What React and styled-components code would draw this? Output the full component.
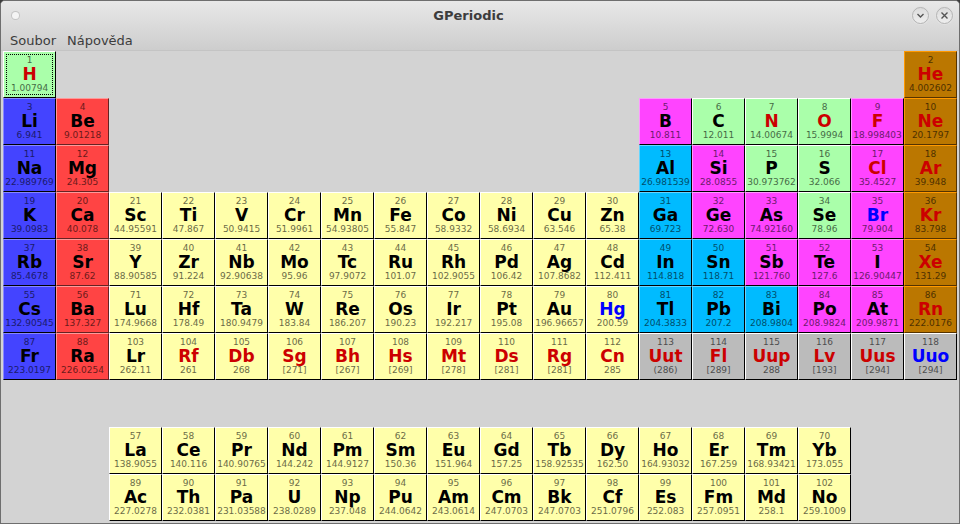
import React from 'react';
import styled, { createGlobalStyle } from 'styled-components';

const Global = createGlobalStyle`
  html, body { margin: 0; padding: 0; background: #3c3c3c; }
  body { font-family: "DejaVu Sans", sans-serif; }
`;

const PALETTE = {
  g: { bg: '#aaffaa', hi: '#ffffff', lo: '#000000' },
  a: { bg: '#4444ff', hi: '#8888ff', lo: '#000000' },
  e: { bg: '#ff4444', hi: '#ff9999', lo: '#662222' },
  t: { bg: '#ffffaa', hi: '#ffffff', lo: '#000000' },
  m: { bg: '#00bbff', hi: '#66d6ff', lo: '#000000' },
  s: { bg: '#ff44ff', hi: '#ff99ff', lo: '#000000' },
  n: { bg: '#bb7700', hi: '#ff9900', lo: '#553300' },
  u: { bg: '#bbbbbb', hi: '#ffffff', lo: '#000000' },
};

const INK = { k: '#000000', r: '#cc0000', b: '#0000ff' };

// [symbol, number, mass, palette, ink, column, row]
const ELEMENTS = [
  ['H', 1, '1.00794', 'g', 'r', 1, 1], ['He', 2, '4.002602', 'n', 'r', 18, 1],
  ['Li', 3, '6.941', 'a', 'k', 1, 2], ['Be', 4, '9.01218', 'e', 'k', 2, 2],
  ['B', 5, '10.811', 's', 'k', 13, 2], ['C', 6, '12.011', 'g', 'k', 14, 2],
  ['N', 7, '14.00674', 'g', 'r', 15, 2], ['O', 8, '15.9994', 'g', 'r', 16, 2],
  ['F', 9, '18.998403', 's', 'r', 17, 2], ['Ne', 10, '20.1797', 'n', 'r', 18, 2],
  ['Na', 11, '22.989769', 'a', 'k', 1, 3], ['Mg', 12, '24.305', 'e', 'k', 2, 3],
  ['Al', 13, '26.981539', 'm', 'k', 13, 3], ['Si', 14, '28.0855', 's', 'k', 14, 3],
  ['P', 15, '30.973762', 'g', 'k', 15, 3], ['S', 16, '32.066', 'g', 'k', 16, 3],
  ['Cl', 17, '35.4527', 's', 'r', 17, 3], ['Ar', 18, '39.948', 'n', 'r', 18, 3],
  ['K', 19, '39.0983', 'a', 'k', 1, 4], ['Ca', 20, '40.078', 'e', 'k', 2, 4],
  ['Sc', 21, '44.95591', 't', 'k', 3, 4], ['Ti', 22, '47.867', 't', 'k', 4, 4],
  ['V', 23, '50.9415', 't', 'k', 5, 4], ['Cr', 24, '51.9961', 't', 'k', 6, 4],
  ['Mn', 25, '54.93805', 't', 'k', 7, 4], ['Fe', 26, '55.847', 't', 'k', 8, 4],
  ['Co', 27, '58.9332', 't', 'k', 9, 4], ['Ni', 28, '58.6934', 't', 'k', 10, 4],
  ['Cu', 29, '63.546', 't', 'k', 11, 4], ['Zn', 30, '65.38', 't', 'k', 12, 4],
  ['Ga', 31, '69.723', 'm', 'k', 13, 4], ['Ge', 32, '72.630', 's', 'k', 14, 4],
  ['As', 33, '74.92160', 's', 'k', 15, 4], ['Se', 34, '78.96', 'g', 'k', 16, 4],
  ['Br', 35, '79.904', 's', 'b', 17, 4], ['Kr', 36, '83.798', 'n', 'r', 18, 4],
  ['Rb', 37, '85.4678', 'a', 'k', 1, 5], ['Sr', 38, '87.62', 'e', 'k', 2, 5],
  ['Y', 39, '88.90585', 't', 'k', 3, 5], ['Zr', 40, '91.224', 't', 'k', 4, 5],
  ['Nb', 41, '92.90638', 't', 'k', 5, 5], ['Mo', 42, '95.96', 't', 'k', 6, 5],
  ['Tc', 43, '97.9072', 't', 'k', 7, 5], ['Ru', 44, '101.07', 't', 'k', 8, 5],
  ['Rh', 45, '102.9055', 't', 'k', 9, 5], ['Pd', 46, '106.42', 't', 'k', 10, 5],
  ['Ag', 47, '107.8682', 't', 'k', 11, 5], ['Cd', 48, '112.411', 't', 'k', 12, 5],
  ['In', 49, '114.818', 'm', 'k', 13, 5], ['Sn', 50, '118.71', 'm', 'k', 14, 5],
  ['Sb', 51, '121.760', 's', 'k', 15, 5], ['Te', 52, '127.6', 's', 'k', 16, 5],
  ['I', 53, '126.90447', 's', 'k', 17, 5], ['Xe', 54, '131.29', 'n', 'r', 18, 5],
  ['Cs', 55, '132.90545', 'a', 'k', 1, 6], ['Ba', 56, '137.327', 'e', 'k', 2, 6],
  ['Lu', 71, '174.9668', 't', 'k', 3, 6], ['Hf', 72, '178.49', 't', 'k', 4, 6],
  ['Ta', 73, '180.9479', 't', 'k', 5, 6], ['W', 74, '183.84', 't', 'k', 6, 6],
  ['Re', 75, '186.207', 't', 'k', 7, 6], ['Os', 76, '190.23', 't', 'k', 8, 6],
  ['Ir', 77, '192.217', 't', 'k', 9, 6], ['Pt', 78, '195.08', 't', 'k', 10, 6],
  ['Au', 79, '196.96657', 't', 'k', 11, 6], ['Hg', 80, '200.59', 't', 'b', 12, 6],
  ['Tl', 81, '204.3833', 'm', 'k', 13, 6], ['Pb', 82, '207.2', 'm', 'k', 14, 6],
  ['Bi', 83, '208.9804', 'm', 'k', 15, 6], ['Po', 84, '208.9824', 's', 'k', 16, 6],
  ['At', 85, '209.9871', 's', 'k', 17, 6], ['Rn', 86, '222.0176', 'n', 'r', 18, 6],
  ['Fr', 87, '223.0197', 'a', 'k', 1, 7], ['Ra', 88, '226.0254', 'e', 'k', 2, 7],
  ['Lr', 103, '262.11', 't', 'k', 3, 7], ['Rf', 104, '261', 't', 'r', 4, 7],
  ['Db', 105, '268', 't', 'r', 5, 7], ['Sg', 106, '[271]', 't', 'r', 6, 7],
  ['Bh', 107, '[267]', 't', 'r', 7, 7], ['Hs', 108, '[269]', 't', 'r', 8, 7],
  ['Mt', 109, '[278]', 't', 'r', 9, 7], ['Ds', 110, '[281]', 't', 'r', 10, 7],
  ['Rg', 111, '[281]', 't', 'r', 11, 7], ['Cn', 112, '285', 't', 'r', 12, 7],
  ['Uut', 113, '(286)', 'u', 'r', 13, 7], ['Fl', 114, '[289]', 'u', 'r', 14, 7],
  ['Uup', 115, '288', 'u', 'r', 15, 7], ['Lv', 116, '[193]', 'u', 'r', 16, 7],
  ['Uus', 117, '[294]', 'u', 'r', 17, 7], ['Uuo', 118, '[294]', 'u', 'b', 18, 7],
  ['La', 57, '138.9055', 't', 'k', 3, 9], ['Ce', 58, '140.116', 't', 'k', 4, 9],
  ['Pr', 59, '140.90765', 't', 'k', 5, 9], ['Nd', 60, '144.242', 't', 'k', 6, 9],
  ['Pm', 61, '144.9127', 't', 'k', 7, 9], ['Sm', 62, '150.36', 't', 'k', 8, 9],
  ['Eu', 63, '151.964', 't', 'k', 9, 9], ['Gd', 64, '157.25', 't', 'k', 10, 9],
  ['Tb', 65, '158.92535', 't', 'k', 11, 9], ['Dy', 66, '162.50', 't', 'k', 12, 9],
  ['Ho', 67, '164.93032', 't', 'k', 13, 9], ['Er', 68, '167.259', 't', 'k', 14, 9],
  ['Tm', 69, '168.93421', 't', 'k', 15, 9], ['Yb', 70, '173.055', 't', 'k', 16, 9],
  ['Ac', 89, '227.0278', 't', 'k', 3, 10], ['Th', 90, '232.0381', 't', 'k', 4, 10],
  ['Pa', 91, '231.03588', 't', 'k', 5, 10], ['U', 92, '238.0289', 't', 'k', 6, 10],
  ['Np', 93, '237.048', 't', 'k', 7, 10], ['Pu', 94, '244.0642', 't', 'k', 8, 10],
  ['Am', 95, '243.0614', 't', 'k', 9, 10], ['Cm', 96, '247.0703', 't', 'k', 10, 10],
  ['Bk', 97, '247.0703', 't', 'k', 11, 10], ['Cf', 98, '251.0796', 't', 'k', 12, 10],
  ['Es', 99, '252.083', 't', 'k', 13, 10], ['Fm', 100, '257.0951', 't', 'k', 14, 10],
  ['Md', 101, '258.1', 't', 'k', 15, 10], ['No', 102, '259.1009', 't', 'k', 16, 10],
];

const Window = styled.div`
  width: 960px;
  height: 524px;
  box-sizing: border-box;
  display: flex;
  flex-direction: column;
  overflow: hidden;
  border: 1px solid #6e6e6e;
  border-radius: 5px 5px 0 0;
  background: #d3d3d3;
`;

const Chrome = styled.header`
  flex: none;
  background: linear-gradient(#e8e8e8, #cdcdcd);
  border-bottom: 1px solid #c4c4c4;
`;

const TitleBar = styled.div`
  height: 29px;
  display: flex;
  align-items: center;
  padding: 0 6px 0 11px;
`;

const Title = styled.h1`
  flex: 1;
  margin: 0;
  padding-left: 6px;
  text-align: center;
  font-size: 13px;
  font-weight: 700;
  color: #3c3c3c;
`;

const MenuDot = styled.span`
  width: 7px;
  height: 7px;
  border-radius: 50%;
  background: #f4f4f4;
  box-shadow: 0 0 0 1px #c4c4c4;
`;

const Controls = styled.div`
  display: flex;
  gap: 7px;
`;

const RoundButton = styled.button`
  width: 17px;
  height: 17px;
  padding: 0;
  display: flex;
  align-items: center;
  justify-content: center;
  border-radius: 50%;
  border: 1px solid #b4b4b4;
  background: linear-gradient(#dcdcdc, #eeeeee);
  box-shadow: 0 0 0 1px #e2e2e2;
`;

const MenuBar = styled.nav`
  height: 20px;
  box-sizing: border-box;
  display: flex;
  align-items: center;
  gap: 11px;
  padding: 1px 0 0 9px;
  font-size: 13px;
  color: #3c3c3c;
`;

const Board = styled.main`
  display: grid;
  grid-template-columns: repeat(18, 53px);
  grid-template-rows: repeat(10, 47px);
  padding-left: 2px;
`;

const Cell = styled.div`
  grid-column: ${p => p.$col};
  grid-row: ${p => p.$row};
  box-sizing: border-box;
  position: relative;
  display: flex;
  flex-direction: column;
  align-items: center;
  background: ${p => PALETTE[p.$kind].bg};
  border-style: solid;
  border-width: 1px;
  border-color: ${p => PALETTE[p.$kind].hi} ${p => PALETTE[p.$kind].lo} ${p => PALETTE[p.$kind].lo} ${p => PALETTE[p.$kind].hi};
  color: #000;
`;

const FocusRing = styled.span`
  position: absolute;
  inset: 2px;
  border: 1px dotted #000;
`;

const Num = styled.span`
  font-size: 9px;
  line-height: 11px;
  margin-top: 3px;
  opacity: 0.6;
`;

const Symbol = styled.span`
  font-size: 17px;
  line-height: 17px;
  font-weight: 700;
  color: ${p => INK[p.$ink]};
`;

const Mass = styled.span`
  font-size: 9px;
  line-height: 11px;
  white-space: nowrap;
  opacity: 0.6;
`;

export default function App() {
  return (
    <>
      <Global />
      <Window>
        <Chrome>
          <TitleBar>
            <MenuDot />
            <Title>GPeriodic</Title>
            <Controls>
              <RoundButton aria-label="Minimize">
                <svg width="9" height="9" viewBox="0 0 9 9"><path d="M1.5 3 L4.5 6 L7.5 3" fill="none" stroke="#555" strokeWidth="1.4" /></svg>
              </RoundButton>
              <RoundButton aria-label="Close">
                <svg width="9" height="9" viewBox="0 0 9 9"><path d="M1.5 1.5 L7.5 7.5 M7.5 1.5 L1.5 7.5" fill="none" stroke="#555" strokeWidth="1.4" /></svg>
              </RoundButton>
            </Controls>
          </TitleBar>
          <MenuBar>
            <span>Soubor</span>
            <span>Nápověda</span>
          </MenuBar>
        </Chrome>
        <Board>
          {ELEMENTS.map(([sym, num, mass, kind, ink, col, row]) => (
            <Cell key={num} $kind={kind} $col={col} $row={row}>
              {num === 1 && <FocusRing />}
              <Num>{num}</Num>
              <Symbol $ink={ink}>{sym}</Symbol>
              <Mass>{mass}</Mass>
            </Cell>
          ))}
        </Board>
      </Window>
    </>
  );
}
